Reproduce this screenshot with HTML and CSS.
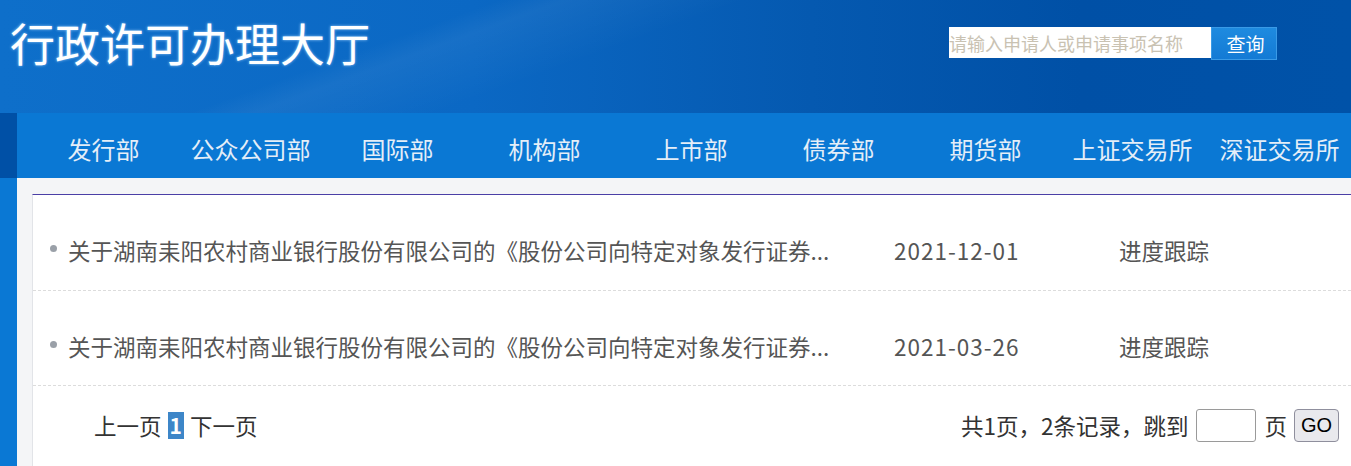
FILE: index.html
```html
<!DOCTYPE html>
<html lang="zh-CN">
<head>
<meta charset="utf-8">
<title>行政许可办理大厅</title>
<link rel="stylesheet" href="styles.css">
</head>
<body>
<div class="header">
  <h1 class="site-title">行政许可办理大厅</h1>
  <form class="search">
    <input class="search-input" type="text" placeholder="请输入申请人或申请事项名称">
    <button class="search-btn" type="button">查询</button>
  </form>
</div>
<div class="main">
  <div class="side">
    <div class="side-top"></div>
  </div>
  <div class="content">
    <ul class="nav">
      <li>发行部</li>
      <li>公众公司部</li>
      <li>国际部</li>
      <li>机构部</li>
      <li>上市部</li>
      <li>债券部</li>
      <li>期货部</li>
      <li>上证交易所</li>
      <li>深证交易所</li>
    </ul>
    <div class="gutter">
      <div class="box">
        <div class="row">
          <span class="dot"></span>
          <span class="r-title">关于湖南耒阳农村商业银行股份有限公司的《股份公司向特定对象发行证券...</span>
          <span class="r-date">2021-12-01</span>
          <span class="r-link">进度跟踪</span>
        </div>
        <div class="row">
          <span class="dot"></span>
          <span class="r-title">关于湖南耒阳农村商业银行股份有限公司的《股份公司向特定对象发行证券...</span>
          <span class="r-date">2021-03-26</span>
          <span class="r-link">进度跟踪</span>
        </div>
        <div class="pager">
          <div class="pager-left">
            <span>上一页</span>
            <span class="cur">1</span>
            <span>下一页</span>
          </div>
          <div class="pager-right">
            <span>共1页，2条记录，跳到</span>
            <input class="jump" type="text">
            <span>页</span>
            <button class="go" type="button">GO</button>
          </div>
        </div>
      </div>
    </div>
  </div>
</div>
</body>
</html>
```

FILE: styles.css
```css
* { box-sizing: border-box; }
html, body { margin: 0; padding: 0; }
body {
  font-family: "Noto Sans CJK SC", "Noto Sans", sans-serif;
  background: #ffffff;
  width: 1351px;
  height: 466px;
  overflow: hidden;
}
.header {
  height: 113px;
  display: flex;
  align-items: flex-start;
  background:
    linear-gradient(160deg, rgba(255,255,255,0) 0%, rgba(255,255,255,0) 30%, rgba(255,255,255,0.05) 34%, rgba(255,255,255,0) 45%),
    linear-gradient(90deg, #0e6fca 0%, #0b68c4 35%, #0559b0 60%, #0050a6 80%, #0052a8 100%);
}
.site-title {
  margin: 0;
  padding: 17px 0 0 10px;
  font-size: 45px;
  line-height: 52px;
  font-weight: 400;
  color: #ffffff;
  letter-spacing: 0;
  text-shadow: 0 0 3px rgba(170, 215, 255, 0.9);
}
.search {
  margin: 27px 74px 0 auto;
  display: flex;
  align-items: flex-start;
}
.search-input {
  width: 262px;
  height: 31px;
  border: 0;
  margin: 0;
  padding: 0;
  font-family: inherit;
  font-size: 18px;
  background: #ffffff;
  outline: none;
}
.search-input::placeholder { color: #c9c2b2; }
.search-btn {
  width: 66px;
  height: 33px;
  border: 0;
  margin: 0;
  padding: 0 0 0 3px;
  font-family: inherit;
  font-size: 19px;
  color: #ffffff;
  background: linear-gradient(180deg, #1f8be0 0%, #137ad4 100%);
  box-shadow: inset 0 0 0 1px #3a9ae6;
}
.main {
  display: flex;
  height: 353px;
}
.side {
  width: 17px;
  flex: none;
  background: #0a78d4;
}
.side-top {
  height: 65px;
  background: #0050a6;
}
.content {
  flex: 1;
  display: flex;
  flex-direction: column;
  min-width: 0;
}
.nav {
  list-style: none;
  margin: 0;
  padding: 6px 0 0 13px;
  height: 65px;
  display: flex;
  background: #0a78d4;
  white-space: nowrap;
  overflow: hidden;
}
.nav li {
  flex: none;
  width: 147px;
  text-align: center;
  font-size: 24px;
  line-height: 59px;
  color: #e4eef8;
}
.gutter {
  flex: 1;
  background: #f4f5f7;
  padding: 16px 0 0 15px;
}
.box {
  height: 100%;
  background: #ffffff;
  border-top: 1px solid #4b3fa6;
  border-left: 1px solid #e2e4e8;
}
.row {
  height: 96px;
  display: flex;
  align-items: center;
  border-bottom: 1px dashed #dcdcdc;
  padding: 14px 0 0 17px;
  font-size: 22.5px;
  color: #555555;
}
.row + .row { height: 95px; padding-top: 16px; }
.dot {
  width: 7px;
  height: 7px;
  border-radius: 50%;
  background: #9aa0a8;
  margin-right: 11px;
  margin-top: -3px;
  flex: none;
}
.r-title {
  width: 826px;
  flex: none;
  white-space: nowrap;
  overflow: hidden;
}
.r-date {
  width: 225px;
  flex: none;
  letter-spacing: 1px;
}
.r-link { flex: none; }
.pager {
  height: 78px;
  display: flex;
  align-items: center;
  justify-content: space-between;
  padding: 0 12px 0 61px;
  font-size: 22.5px;
  color: #333333;
}
.pager-left {
  display: flex;
  align-items: center;
  gap: 6px;
}
.cur {
  background: #3d86c8;
  color: #ffffff;
  font-weight: 700;
  line-height: 27px;
  padding: 0 2px;
  font-size: 21px;
}
.pager-right {
  display: flex;
  align-items: center;
}
.jump {
  width: 60px;
  height: 33px;
  border: 1px solid #9a9a9a;
  border-radius: 3px;
  margin: 0 8px 0 8px;
  padding: 0;
}
.go {
  margin-left: 7px;
  width: 45px;
  height: 33px;
  border: 1px solid #8f8f9d;
  border-radius: 4px;
  background: #e9e9ed;
  font-family: "Liberation Sans", Arial, sans-serif;
  font-size: 20px;
  color: #000000;
  padding: 0;
}
```
